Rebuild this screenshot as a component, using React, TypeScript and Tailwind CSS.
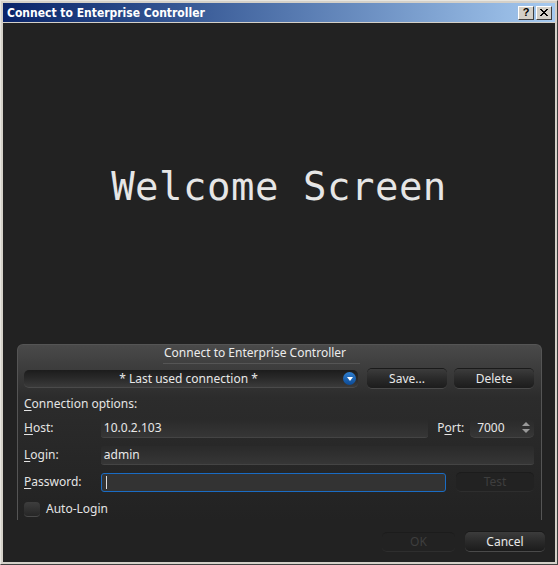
import React from "react";

const ui = { fontFamily: '"Noto Sans", "DejaVu Sans", sans-serif' };

function Btn({ label, disabled, className = "" }: { label: string; disabled?: boolean; className?: string }) {
  return (
    <div
      className={`flex items-center justify-center rounded-[5px] text-[12px] ${
        disabled
          ? "bg-[#222] text-[#3e3e3e] border-b border-[#2e2e2e] border-t border-t-[#1c1c1c]"
          : "bg-gradient-to-b from-[#3c3c3c] via-[#2a2a2a] to-[#1c1c1c] text-[#e8e8e8] border-b border-[#4a4a4a] shadow-[0_-1px_0_#1a1a1a]"
      } ${className}`}
    >
      {label}
    </div>
  );
}

function Field({ value, focused, className = "", children }: { value: string; focused?: boolean; className?: string; children?: React.ReactNode }) {
  return (
    <div
      className={`flex items-center px-[3px] rounded-[3px] text-[12px] text-[#e8e8e8] ${
        focused
          ? "bg-[#333] border border-[#1a6cc4]"
          : "bg-gradient-to-b from-[#2a2a2a] to-[#363636] border-b border-[#444]"
      } ${className}`}
    >
      {focused ? <span className="w-px h-[13px] bg-[#ddd] ml-[1px]" /> : value}
      {children}
    </div>
  );
}

function Label({ u, rest, className = "" }: { u: string; rest: string; className?: string }) {
  return (
    <span className={`text-[12px] text-[#e4e4e4] ${className}`}>
      <span className="underline underline-offset-2">{u}</span>
      {rest}
    </span>
  );
}

export default function App() {
  return (
    <div className="w-[558px] h-[565px] bg-[#d4d0c8] border-t border-l border-t-[#e8e6e0] border-l-[#e8e6e0] border-r border-b border-r-[#404040] border-b-[#404040] p-[2px] flex flex-col" style={ui}>
      {/* title bar */}
      <div className="h-[19px] shrink-0 flex items-center justify-between pl-[4px] pr-[3px] bg-gradient-to-r from-[#0a246a] to-[#a6caf0]">
        <span className="text-white font-bold text-[12px] leading-none" style={{ fontFamily: '"DejaVu Sans Condensed", "DejaVu Sans", sans-serif' }}>
          Connect to Enterprise Controller
        </span>
        <div className="flex gap-[2px]">
          <div className="w-[16px] h-[14px] bg-[#d4d0c8] border border-t-white border-l-white border-r-[#404040] border-b-[#404040] flex items-center justify-center text-[11px] font-bold text-black leading-none" style={{ fontFamily: '"Liberation Sans", sans-serif' }}>?</div>
          <div className="w-[16px] h-[14px] bg-[#d4d0c8] border border-t-white border-l-white border-r-[#404040] border-b-[#404040] flex items-center justify-center">
            <svg width="9" height="8" viewBox="0 0 9 8">
              <path d="M1 0 L8 7 M0 0 L7 7 M8 0 L1 7 M7 0 L0 7" stroke="#000" strokeWidth="1" />
            </svg>
          </div>
        </div>
      </div>

      {/* content */}
      <div className="flex-1 bg-[#222222] mt-[1px] flex flex-col relative">
        <div className="h-[321px] shrink-0 flex items-center justify-center">
          <span className="text-[39px] text-[#e6e6e6] tracking-[0.5px] mt-[8px]" style={{ fontFamily: '"DejaVu Sans Mono", "Liberation Mono", monospace', fontWeight: 300 }}>
            Welcome Screen
          </span>
        </div>

        {/* panel */}
        <div className="ml-[14px] mr-[13px] h-[176px] rounded-t-[6px] bg-gradient-to-b from-[#4a4a4a] via-[#2c2c2c] via-30% to-[#222] border-t border-l border-r border-[#555] border-b-0 pl-[6px] pr-[7px] flex flex-col">
          <div className="h-[19px] flex items-end">
            <span className="ml-[139px] text-[12px] text-[#ececec] border-b border-[#555] pl-[1px] pr-[14px] pb-[1px]">Connect to Enterprise Controller</span>
          </div>
          <div className="flex items-center mt-[5px] h-[20px]">
            <div className="w-[334px] h-[18px] rounded-[5px] bg-gradient-to-b from-[#1c1c1c] via-[#2a2a2a] to-[#3a3a3a] border-b border-[#4a4a4a] flex items-center relative text-[12px] text-[#e8e8e8]">
              <span className="flex-1 text-center pl-[10px]">* Last used connection *</span>
              <div className="w-[13px] h-[13px] rounded-full bg-gradient-to-b from-[#2f7fd0] to-[#0c4a94] flex items-center justify-center mr-[2px]">
                <svg width="6" height="4" viewBox="0 0 6 4"><path d="M0 0 H6 L3 4 Z" fill="#fff" /></svg>
              </div>
            </div>
            <Btn label="Save..." className="w-[80px] h-[20px] ml-[9px]" />
            <Btn label="Delete" className="w-[80px] h-[20px] ml-[7px]" />
          </div>
          <div className="mt-[7px] h-[16px] flex items-center">
            <Label u="C" rest="onnection options:" />
          </div>
          <div className="flex items-center mt-[6px] h-[20px]">
            <Label u="H" rest="ost:" className="w-[77px]" />
            <Field value="10.0.2.103" className="w-[328px] h-[19px]" />
            <span className="text-[12px] text-[#e4e4e4] ml-[9px] w-[33px]">
              P<span className="underline underline-offset-2">o</span>rt:
            </span>
            <Field value="7000" className="w-[64px] h-[19px] pl-[7px] rounded-[5px] justify-between">
              <svg width="8" height="11" viewBox="0 0 8 11" className="mr-[1px]"><path d="M4 0 L8 4 H0 Z M4 11 L8 7 H0 Z" fill="#999" /></svg>
            </Field>
          </div>
          <div className="flex items-center mt-[7px] h-[20px]">
            <Label u="L" rest="ogin:" className="w-[77px]" />
            <Field value="admin" className="w-[434px] h-[19px]" />
          </div>
          <div className="flex items-center mt-[7px] h-[20px]">
            <Label u="P" rest="assword:" className="w-[77px]" />
            <Field value="" focused className="w-[346px] h-[19px]" />
            <Btn label="Test" disabled className="w-[78px] h-[20px] ml-[10px]" />
          </div>
          <div className="flex items-center mt-[7px] h-[20px]">
            <div className="w-[16px] h-[15px] rounded-[4px] bg-gradient-to-b from-[#3e3e3e] to-[#262626] border-b border-[#4a4a4a]" />
            <span className="text-[12px] text-[#e4e4e4] ml-[6px]">Auto-Login</span>
          </div>
        </div>

        <div className="flex justify-end mt-[12px] mr-[10px] gap-[10px]">
          <Btn label="OK" disabled className="w-[73px] h-[20px]" />
          <Btn label="Cancel" className="w-[80px] h-[20px]" />
        </div>
      </div>
    </div>
  );
}
